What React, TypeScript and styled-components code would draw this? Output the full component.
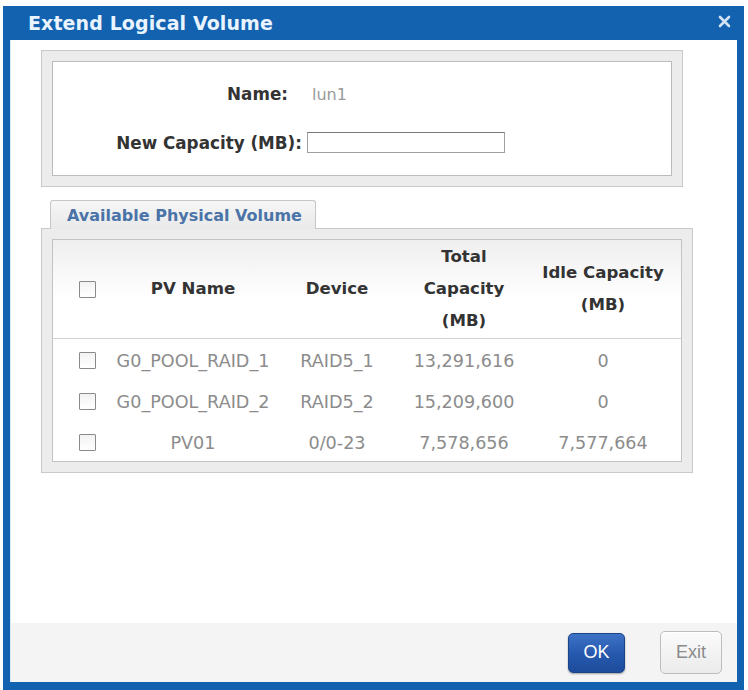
import styled, { createGlobalStyle } from "styled-components";

const GlobalStyle = createGlobalStyle`
  html, body {
    margin: 0;
    padding: 0;
    background: #ffffff;
  }
  body {
    font-family: "DejaVu Sans", Verdana, sans-serif;
    color: #333;
  }
`;

const Dialog = styled.div`
  width: 741px;
  height: 684px;
  margin: 6px 0 0 3px;
  box-sizing: border-box;
  background: #1262b0;
  padding: 0 7px 8px 7px;
  display: flex;
  flex-direction: column;
`;

const TitleBar = styled.div`
  height: 34px;
  display: flex;
  align-items: center;
  justify-content: space-between;
  padding: 0 6px 0 18px;
`;

const Title = styled.h1`
  margin: 0;
  font-size: 19px;
  font-weight: bold;
  color: #e9f4ff;
  letter-spacing: 0.1px;
`;

const CloseButton = styled.button`
  border: none;
  background: none;
  padding: 0;
  margin-top: -4px;
  width: 13px;
  height: 13px;
  display: flex;
  cursor: pointer;
`;

const Body = styled.div`
  flex: 1;
  background: #ffffff;
  display: flex;
  flex-direction: column;
  border-left: 1px solid #d8e8f6;
`;

const Content = styled.div`
  flex: 1;
  padding: 10px 0 0 30px;
`;

const Panel = styled.div<{ right: number }>`
  margin-right: ${(p) => p.right}px;
  background: #ececec;
  border: 1px solid #c9c9c9;
  padding: 10px;
`;

const NameBox = styled.div`
  background: #fff;
  border: 1px solid #bcbcbc;
  height: 113px;
  display: grid;
  grid-template-columns: 254px 1fr;
  align-content: center;
  row-gap: 28px;
  align-items: center;
`;

const Label = styled.label<{ trail?: number }>`
  text-align: right;
  font-weight: bold;
  font-size: 16.8px;
  color: #333;
  padding-right: ${(p) => p.trail ?? 5}px;
`;

const Value = styled.span`
  font-size: 16px;
  color: #9a9a9a;
  padding-left: 5px;
`;

const TextInput = styled.input`
  width: 198px;
  height: 21px;
  box-sizing: border-box;
  border: 1px solid #a0a0a0;
  border-top-color: #7a7a7a;
  margin: 0;
  padding: 0 4px;
`;

const TabStrip = styled.div`
  margin-top: 13px;
  padding-left: 9px;
  display: flex;
`;

const Tab = styled.div`
  height: 28px;
  padding: 0 13px 0 16px;
  display: flex;
  align-items: center;
  border: 1px solid #c6c6c6;
  border-bottom: none;
  border-radius: 3px 3px 0 0;
  background: linear-gradient(#f6f6f6, #e9e9e9);
  font-weight: bold;
  font-size: 16px;
  color: #4a73a8;
  margin-bottom: -1px;
  position: relative;
`;

const TableBox = styled.div`
  background: #fff;
  border: 1px solid #c3c3c3;
  height: 223px;
  box-sizing: border-box;
`;

const Row = styled.div<{ head?: boolean }>`
  display: grid;
  grid-template-columns: 66px 148px 140px 114px 164px;
  justify-items: center;
  align-items: center;
  height: ${(p) => (p.head ? "98px" : "41px")};
  ${(p) =>
    p.head
      ? `
    background: linear-gradient(#efefef 0px, #f7f7f7 30px, #ffffff 60px);
    border-bottom: 1px solid #d2d2d2;
    margin-bottom: 1px;
  `
      : ""}
`;

const HeadCell = styled.div`
  font-weight: bold;
  font-size: 16.6px;
  line-height: 32px;
  text-align: center;
  color: #333;
  white-space: nowrap;
`;

const Cell = styled.div`
  font-size: 17.6px;
  color: #8c8c8c;
  white-space: nowrap;
`;

const Check = styled.input.attrs({ type: "checkbox" })`
  appearance: none;
  width: 17px;
  height: 17px;
  margin: 0 0 0 3px;
  border: 1px solid #8a8a8a;
  border-radius: 1px;
  background: linear-gradient(#f2f2f2, #ffffff);
`;

const Footer = styled.div`
  height: 59px;
  background: #f4f4f4;
  display: flex;
  align-items: center;
  justify-content: flex-end;
  gap: 35px;
  padding-right: 15px;
`;

const Button = styled.button<{ primary?: boolean }>`
  font-family: "Liberation Sans", Arial, sans-serif;
  font-size: 18px;
  border-radius: 5px;
  cursor: pointer;
  width: ${(p) => (p.primary ? "57px" : "62px")};
  height: ${(p) => (p.primary ? "40px" : "43px")};
  color: ${(p) => (p.primary ? "#ffffff" : "#8a8a8a")};
  border: 1px solid ${(p) => (p.primary ? "#1b4489" : "#bdbdbd")};
  background: ${(p) =>
    p.primary
      ? "linear-gradient(#3d72c6, #2558ad 55%, #1e4c9c)"
      : "linear-gradient(#fbfbfb, #ebebeb)"};
  box-shadow: ${(p) =>
    p.primary ? "0 1px 2px rgba(0,0,0,0.35)" : "inset 0 1px 0 #fff"};
`;

const volumes = [
  { name: "G0_POOL_RAID_1", device: "RAID5_1", total: "13,291,616", idle: "0" },
  { name: "G0_POOL_RAID_2", device: "RAID5_2", total: "15,209,600", idle: "0" },
  { name: "PV01", device: "0/0-23", total: "7,578,656", idle: "7,577,664" },
];

const App = () => {
  return (
    <>
      <GlobalStyle />
      <Dialog>
        <TitleBar>
          <Title>Extend Logical Volume</Title>
          <CloseButton aria-label="close">
            <svg width="13" height="13" viewBox="0 0 13 13">
              <path
                d="M2 2 L11 11 M11 2 L2 11"
                stroke="#d3e3f3"
                strokeWidth="2.6"
                strokeLinecap="round"
              />
            </svg>
          </CloseButton>
        </TitleBar>
        <Body>
          <Content>
            <Panel right={54}>
              <NameBox>
                <Label trail={19}>Name:</Label>
                <Value>lun1</Value>
                <Label>New Capacity (MB):</Label>
                <div>
                  <TextInput />
                </div>
              </NameBox>
            </Panel>
            <TabStrip>
              <Tab>Available Physical Volume</Tab>
            </TabStrip>
            <Panel right={44}>
              <TableBox>
                <Row head>
                  <Check />
                  <HeadCell>PV Name</HeadCell>
                  <HeadCell>Device</HeadCell>
                  <HeadCell>
                    Total
                    <br />
                    Capacity
                    <br />
                    (MB)
                  </HeadCell>
                  <HeadCell>
                    Idle Capacity
                    <br />
                    (MB)
                  </HeadCell>
                </Row>
                {volumes.map((v) => (
                  <Row key={v.name}>
                    <Check />
                    <Cell>{v.name}</Cell>
                    <Cell>{v.device}</Cell>
                    <Cell>{v.total}</Cell>
                    <Cell>{v.idle}</Cell>
                  </Row>
                ))}
              </TableBox>
            </Panel>
          </Content>
          <Footer>
            <Button primary>OK</Button>
            <Button>Exit</Button>
          </Footer>
        </Body>
      </Dialog>
    </>
  );
};

export default App;
